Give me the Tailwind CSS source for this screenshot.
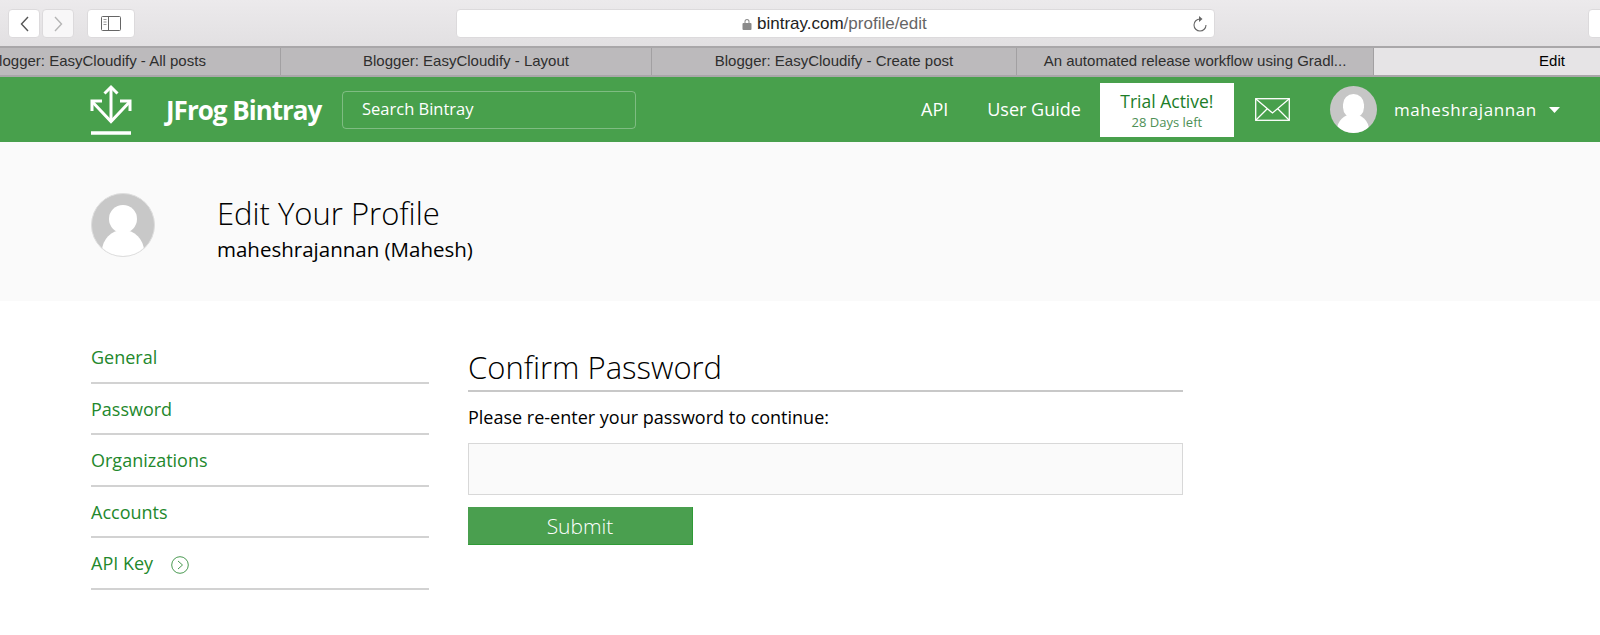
<!DOCTYPE html>
<html lang="en">
<head>
  <meta charset="UTF-8">
  <title>Edit Your Profile</title>
  <script src="https://cdn.jsdelivr.net/npm/@tailwindcss/browser@4"></script>
</head>
<body class="bg-white font-['Open_Sans',sans-serif] text-black overflow-hidden h-[635px]">
  <!-- browser toolbar -->
  <div class="h-[46px] bg-gradient-to-b from-[#eceaec] to-[#e2e0e2] flex items-start pt-[9px] relative overflow-hidden">
    <div class="flex ml-[8px] gap-[2px] shrink-0">
      <div class="w-[32px] h-[29px] bg-white rounded-[4px] border border-[#dcdadc] flex items-center justify-center">
        <svg width="9" height="16" viewBox="0 0 9 16" fill="none" stroke="#555" stroke-width="1.4"><path d="M8 1 1.500 8 8 15"/></svg>
      </div>
      <div class="w-[32px] h-[29px] bg-[#f8f7f8] rounded-[4px] border border-[#dcdadc] flex items-center justify-center">
        <svg width="9" height="16" viewBox="0 0 9 16" fill="none" stroke="#b5b5b5" stroke-width="1.4"><path d="M1 1 7.500 8 1 15"/></svg>
      </div>
    </div>
    <div class="w-[48px] h-[29px] ml-[13px] shrink-0 bg-white rounded-[4px] border border-[#dcdadc] flex items-center justify-center">
      <svg width="20" height="15" viewBox="0 0 20 15" fill="none" stroke="#666"><rect x="0.500" y="0.500" width="19" height="14" rx="1"/><path d="M7.500 1v13"/><path d="M2.500 3.500h3M2.500 6h3M2.500 8.500h3" stroke="#999"/></svg>
    </div>
    <div class="w-[759px] h-[29px] ml-[321px] shrink-0 bg-white rounded-[4px] border border-[#dcdadc] flex items-center pl-[285px] relative">
      <svg width="10" height="12" viewBox="0 0 10 12" class="mr-[5px]" fill="#8a8a8a"><path d="M2.500 5V3.500a2.500 2.500 0 0 1 5 0V5H6.500V3.500a1.500 1.500 0 0 0-3 0V5z"/><rect x="0.500" y="5" width="9" height="7" rx="1"/></svg>
      <span class="font-['Liberation_Sans',sans-serif] text-[17px] text-[#222]">bintray.com<span class="text-[#666]">/profile/edit</span></span>
      <svg width="16" height="18" viewBox="0 0 16 18" class="absolute right-[6px] top-[5px]" fill="none" stroke="#666" stroke-width="1.100"><path d="M8 4a6 6 0 1 0 6 6"/><path d="M7 1l3.500 3L7 7" fill="#666" stroke="none"/></svg>
    </div>
    <div class="w-[40px] h-[29px] ml-[373px] shrink-0 bg-white rounded-l-[4px] border border-[#dcdadc]"></div>
  </div>

  <!-- tab strip -->
  <div class="h-[31px] bg-[#bcbabc] border-y-2 border-[#a9a7a9] flex overflow-hidden font-['Liberation_Sans',sans-serif] text-[15px] text-[#2e2e2e]">
    <div class="w-[366px] ml-[-85px] shrink-0 flex items-center justify-center border-r border-[#a2a0a2]">Blogger: EasyCloudify - All posts</div>
    <div class="w-[371px] shrink-0 flex items-center justify-center border-r border-[#a2a0a2]">Blogger: EasyCloudify - Layout</div>
    <div class="w-[365px] shrink-0 flex items-center justify-center border-r border-[#a2a0a2]">Blogger: EasyCloudify - Create post</div>
    <div class="w-[357px] shrink-0 flex items-center justify-center border-r border-[#a2a0a2]">An automated release workflow using Gradl...</div>
    <div class="w-[356px] shrink-0 flex items-center justify-center bg-[#e6e4e6] text-black">Edit</div>
  </div>

  <!-- site header -->
  <header class="h-[65px] bg-[#48a04c] flex items-center text-white">
    <svg width="42" height="52" viewBox="0 0 42 52" class="ml-[90px] shrink-0" fill="none" stroke="white" stroke-width="3">
      <path d="M21 3v35"/>
      <path d="M14.500 9.500 21 3l6.500 6.500"/>
      <path d="M2.500 18 21 37.500 39.500 18"/>
      <path d="M2 27V17h10M40 27V17H30"/>
      <path d="M1 49h40" stroke-width="3.500"/>
    </svg>
    <span class="ml-[34px] w-[156px] whitespace-nowrap text-[26px] font-bold tracking-[-1px] leading-none">JFrog Bintray</span>
    <div class="ml-[20px] w-[294px] h-[38px] rounded-[4px] border border-white/30 flex items-center pl-[19px] text-[16.500px]">Search Bintray</div>
    <span class="ml-[285px] text-[18px]">API</span>
    <span class="ml-[39px] text-[18px]">User Guide</span>
    <div class="ml-[19px] w-[134px] h-[54px] bg-white text-center text-[#207d28] flex flex-col justify-center">
      <div class="text-[17.500px] leading-[24px]">Trial Active!</div>
      <div class="text-[13px] leading-[18px] text-[#4d8f55]">28 Days left</div>
    </div>
    <svg width="35" height="23" viewBox="0 0 35 23" class="ml-[21px] shrink-0" fill="none" stroke="white" stroke-width="1.300">
      <rect x="0.700" y="0.700" width="33.600" height="21.600"/>
      <path d="M1 1l16.500 14L34 1M1 22l11-11M34 22 23 11"/>
    </svg>
    <div class="ml-[40px] w-[47px] h-[47px] rounded-full bg-[#c6c6c6] overflow-hidden shrink-0 flex flex-col items-center">
      <div class="w-[21px] h-[24px] mt-[8px] shrink-0 rounded-full bg-white"></div>
      <div class="w-[32px] h-[36px] mt-[-4px] shrink-0 rounded-full bg-white"></div>
    </div>
    <span class="ml-[17px] text-[17px] tracking-[0.600px]">maheshrajannan</span>
    <svg width="11" height="6" viewBox="0 0 11 6" class="ml-[12px]" fill="white"><path d="M0 0h11L5.500 6z"/></svg>
  </header>

  <!-- profile band -->
  <section class="h-[159px] bg-[#fafafa] flex pl-[91px] pt-[51px]">
    <div class="w-[64px] h-[64px] rounded-full bg-[#c8c8c8] border border-[#dedede] overflow-hidden shrink-0 flex flex-col items-center">
      <div class="w-[28px] h-[28px] mt-[11px] shrink-0 rounded-full bg-white"></div>
      <div class="w-[42px] h-[46px] mt-[-3px] shrink-0 rounded-full bg-white"></div>
    </div>
    <div class="ml-[62px]">
      <h1 class="text-[31px] font-light leading-[40px]">Edit Your Profile</h1>
      <p class="text-[20.500px] leading-[32px]">maheshrajannan (Mahesh)</p>
    </div>
  </section>

  <!-- page body -->
  <main class="flex pl-[91px] pt-[31px]">
    <nav class="w-[338px] text-[18px] text-[#23882c]">
      <div class="h-[51.500px] border-b-2 border-[#d2d2d2] flex items-center pt-[2px]">General</div>
      <div class="h-[51.500px] border-b-2 border-[#d2d2d2] flex items-center pt-[2px]">Password</div>
      <div class="h-[51.500px] border-b-2 border-[#d2d2d2] flex items-center pt-[2px]">Organizations</div>
      <div class="h-[51.500px] border-b-2 border-[#d2d2d2] flex items-center pt-[2px]">Accounts</div>
      <div class="h-[51.500px] border-b-2 border-[#d2d2d2] flex items-center pt-[2px]">
        API Key
        <svg width="18" height="18" viewBox="0 0 18 18" class="ml-[18px] mt-[2px]" fill="none" stroke="#4a9a52"><circle cx="9" cy="9" r="8.300"/><path d="M7 5l4.500 4L7 13"/></svg>
      </div>
    </nav>
    <div class="ml-[39px] w-[715px]">
      <h2 class="text-[31px] font-light leading-[40px] pb-[3px] mt-[15px] border-b-2 border-[#c8c8c8]">Confirm Password</h2>
      <p class="text-[18px] leading-[24px] mt-[13px]">Please re-enter your password to continue:</p>
      <input type="text" class="block w-full h-[52px] mt-[14px] bg-[#fafafa] border border-[#d8d8d8]">
      <button class="block w-[225px] h-[38px] mt-[12px] pt-[2px] bg-[#4a9f4f] border-r border-b border-[#2f9a36] text-white text-[21px] font-light">Submit</button>
    </div>
  </main>
</body>
</html>
